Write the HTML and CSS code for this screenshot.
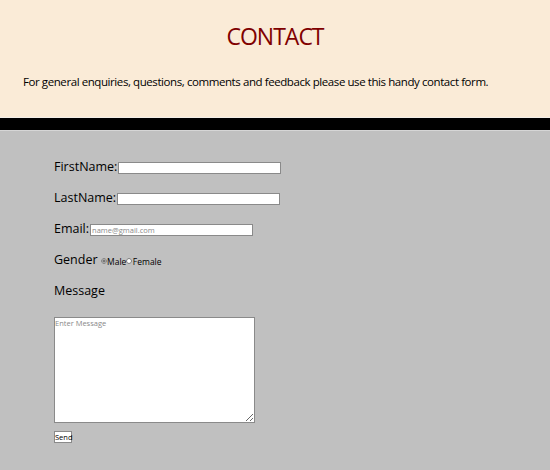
FILE: index.html
```html
<!DOCTYPE html>
<html>
<head>
<meta charset="utf-8">
<title>Contact</title>
<link rel="stylesheet" href="styles.css">
</head>
<body>
<header class="intro">
  <h1 class="title">CONTACT</h1>
  <p class="lead">For general enquiries, questions, comments and feedback please use this handy contact form.</p>
</header>
<div class="bar"></div>
<main class="formwrap">
  <form class="form">
    <div class="row"><label class="lbl">FirstName:</label><input class="field" type="text"></div>
    <div class="row"><label class="lbl">LastName:</label><input class="field" type="text"></div>
    <div class="row"><label class="lbl">Email:</label><input class="field" type="text" placeholder="name@gmail.com"></div>
    <div class="row"><label class="lbl">Gender</label><span class="radios"><input class="radio" type="radio" name="g" checked><span class="rtxt">Male</span><input class="radio" type="radio" name="g"><span class="rtxt">Female</span></span></div>
    <div class="row"><label class="lbl">Message</label></div>
    <textarea class="msg" placeholder="Enter Message"></textarea>
    <button class="send" type="button">Send</button>
  </form>
</main>
</body>
</html>
```
FILE: styles.css
```css
html, body {
  margin: 0;
  padding: 0;
  height: 100%;
  background: #c0c0c0;
  font-family: "Open Sans", sans-serif;
}
body {
  display: flex;
  flex-direction: column;
}
.intro {
  background: #faebd7;
  height: 118px;
  padding: 0 23px;
  border-bottom: 1px solid #f3efe9;
  box-sizing: border-box;
}
.title {
  margin: 0;
  padding-top: 21px;
  text-align: center;
  color: #800000;
  font-weight: normal;
  font-size: 23px;
  letter-spacing: -1px;
  line-height: 30px;
}
.lead {
  margin: 23px 0 0;
  font-size: 11.5px;
  letter-spacing: -0.42px;
  line-height: 15px;
  color: #000;
}
.bar {
  height: 12px;
  background: #000;
  border-bottom: 1px solid #d6d6d6;
}
.formwrap {
  flex: 1;
  padding: 21px 0 0 54px;
}
.form {
  display: flex;
  flex-direction: column;
  align-items: flex-start;
}
.row {
  display: flex;
  align-items: center;
  height: 31px;
  color: #000;
}
.lbl {
  font-size: 12.5px;
  line-height: 17px;
  margin-top: -2px;
}
.field {
  margin: 0 0 0 1px;
  width: 163px;
  height: 12px;
  box-sizing: border-box;
  border: 1px solid #8a8a8a;
  background: #fff;
  padding: 0 1px;
  font-family: "Open Sans", sans-serif;
  font-size: 7.5px;
}
.field::placeholder {
  color: #8a8a8a;
}
.radios {
  display: flex;
  align-items: center;
  margin: 1px 0 0 3px;
  font-size: 8.5px;
}
.radio {
  width: 6px;
  height: 6px;
  margin: 0;
  accent-color: #777;
}
.rtxt {
  margin-left: 0.5px;
}
.msg {
  margin-top: 10px;
  width: 201px;
  height: 106px;
  box-sizing: border-box;
  border: 1px solid #8a8a8a;
  background: #fff;
  padding: 0;
  resize: both;
  font-family: "Open Sans", sans-serif;
  font-size: 7.5px;
}
.msg::placeholder {
  color: #8a8a8a;
}
.send {
  margin-top: 8px;
  width: 18px;
  height: 12px;
  padding: 0;
  border: 1px solid #8a8a8a;
  background: #fff;
  font-family: "Open Sans", sans-serif;
  font-size: 7.5px;
  line-height: 9px;
  color: #000;
}
```
